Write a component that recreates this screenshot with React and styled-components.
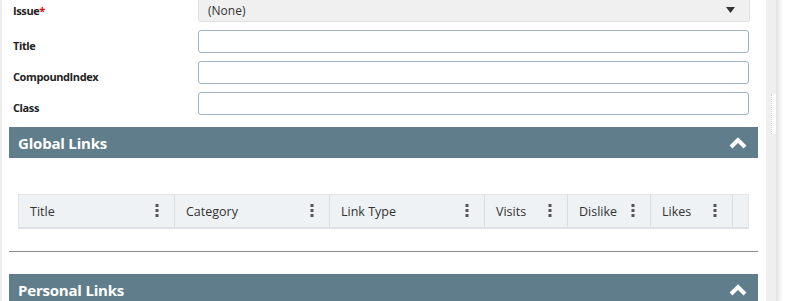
import React from 'react';
import styled, { createGlobalStyle } from 'styled-components';

const GlobalStyle = createGlobalStyle`
    html, body {
        margin: 0;
        padding: 0;
        background: #fff;
        overflow: hidden;
    }
    body {
        font-family: "Open Sans", "Noto Sans", Arial, sans-serif;
        color: #222;
    }
`;

const Page = styled.div`
    display: flex;
    width: 812px;
    height: 301px;
    overflow: hidden;
`;

const Panel = styled.div`
    width: 749px;
    flex-shrink: 0;
    border-left: 2px solid #ededed;
    padding: 0 8px 0 7px;
    background: #fff;
`;

const Track = styled.div`
    width: 10px;
    flex-shrink: 0;
    background: #efefef;
    display: flex;
    justify-content: flex-end;
`;

const Thumb = styled.div`
    width: 4px;
    height: 40px;
    margin-top: 94px;
    background: #fff;
    border-left: 1px dotted #d4d4d4;
`;

const Shade = styled.div`
    width: 7px;
    flex-shrink: 0;
    background: linear-gradient(to right, #e2e2e2, #fff);
`;

const Form = styled.div`
    display: flex;
    flex-direction: column;
    gap: 8px;
    margin-top: -1px;
    padding-left: 4px;
`;

const Row = styled.div`
    display: flex;
    align-items: center;
`;

const Label = styled.label`
    width: 185px;
    flex-shrink: 0;
    padding-top: ${(p) => (p.low ? 8 : 0)}px;
    font-size: 11px;
    font-weight: 700;
    color: #222;
    letter-spacing: -0.4px;
`;

const Required = styled.span`
    color: #e00;
`;

const Select = styled.div`
    flex: 1;
    height: 23px;
    box-sizing: border-box;
    margin-right: 8px;
    padding: 0 14px 0 9px;
    background: #f0f0f0;
    border: 1px solid #e0e0e0;
    border-top: none;
    border-radius: 0 0 3px 3px;
    display: flex;
    align-items: center;
    justify-content: space-between;
    font-size: 12px;
    color: #333;
`;

const Input = styled.input`
    flex: 1;
    height: 23px;
    box-sizing: border-box;
    margin-right: 9px;
    border: 1px solid #9fb3c2;
    border-radius: 3px;
    background: #fff;
    outline: none;
`;

const SectionHeader = styled.div`
    height: 31px;
    margin-top: ${(p) => p.top}px;
    background: #607d8b;
    color: #fff;
    display: flex;
    align-items: center;
    justify-content: space-between;
    padding: 0 11px 0 9px;
    font-size: 15px;
    font-weight: 700;
    letter-spacing: -0.2px;
`;

const Grid = styled.div`
    margin: 36px 9px 0 9px;
    height: 35px;
    box-sizing: border-box;
    display: flex;
    background: #eef2f5;
    border: 1px solid #e2e6e9;
    border-bottom: 2px solid #dde1e5;
`;

const Column = styled.div`
    width: ${(p) => p.w}px;
    flex-shrink: 0;
    box-sizing: border-box;
    border-right: 1px solid #dadee2;
    display: flex;
    align-items: center;
    justify-content: space-between;
    padding: 0 15px 0 11px;
    font-size: 12.5px;
    color: #333;
`;

const Rule = styled.hr`
    margin: 22px 0 0 0;
    border: none;
    border-top: 1px solid #8c8c8c;
`;

function Kebab() {
    return (
        <svg width="4" height="14" viewBox="0 0 4 14">
            <rect x="0.5" y="0" width="3" height="3" fill="#555" />
            <rect x="0.5" y="5" width="3" height="3" fill="#555" />
            <rect x="0.5" y="10" width="3" height="3" fill="#555" />
        </svg>
    );
}

function ChevronUp() {
    return (
        <svg width="18" height="12" viewBox="0 0 18 12">
            <polyline points="2,10 9,3 16,10" fill="none" stroke="#fff" strokeWidth="4" strokeLinejoin="miter" />
        </svg>
    );
}

function Caret() {
    return (
        <svg width="9" height="6" viewBox="0 0 9 6">
            <polygon points="0,0 9,0 4.5,6" fill="#333" />
        </svg>
    );
}

const columns = [
    { title: 'Title', w: 156 },
    { title: 'Category', w: 155 },
    { title: 'Link Type', w: 155 },
    { title: 'Visits', w: 83 },
    { title: 'Dislike', w: 83 },
    { title: 'Likes', w: 82 },
];

const fields = ['Title', 'CompoundIndex', 'Class'];

export default function App() {
    return (
        <Page>
            <GlobalStyle />
            <Panel>
                <Form>
                    <Row>
                        <Label>Issue<Required>*</Required></Label>
                        <Select>
                            <span>(None)</span>
                            <Caret />
                        </Select>
                    </Row>
                    {fields.map((f) => (
                        <Row key={f}>
                            <Label low>{f}</Label>
                            <Input />
                        </Row>
                    ))}
                </Form>
                <SectionHeader top={12}>
                    <span>Global Links</span>
                    <ChevronUp />
                </SectionHeader>
                <Grid>
                    {columns.map((c) => (
                        <Column key={c.title} w={c.w}>
                            <span>{c.title}</span>
                            <Kebab />
                        </Column>
                    ))}
                </Grid>
                <Rule />
                <SectionHeader top={22}>
                    <span>Personal Links</span>
                    <ChevronUp />
                </SectionHeader>
            </Panel>
            <Track>
                <Thumb />
            </Track>
            <Shade />
        </Page>
    );
}
